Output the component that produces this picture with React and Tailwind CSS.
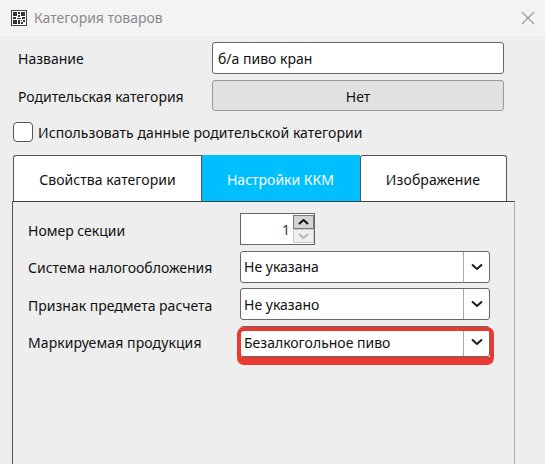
import React from "react";

const Chevron = () => (
  <svg width="12" height="8" viewBox="0 0 12 8" fill="none">
    <path d="M1 1.5L6 6L11 1.5" stroke="#1a1a1a" strokeWidth="2" />
  </svg>
);

const Select = ({ value, highlight, textClass }) => (
  <div className="relative">
    <div className={`flex w-[250px] rounded-[3px] border border-[#666] bg-white ${highlight ? "h-[31px]" : "h-[32px]"}`}>
      <div className={`flex-1 pl-[3px] ${textClass}`}>{value}</div>
      <div className="flex w-[26px] items-center justify-center border-l border-[#aaa]">
        <Chevron />
      </div>
    </div>
    {highlight && (
      <div className="absolute left-[-3px] top-[1px] h-[38px] w-[257px] rounded-[7px] border-[4px] border-b-[8px] border-[#e93a30]" />
    )}
  </div>
);

const Row = ({ label, children }) => (
  <div className="flex items-center">
    <div className="w-[194px] pt-[1px]">{label}</div>
    {children}
  </div>
);

const App = () => {
  return (
    <div className="flex h-[464px] w-[545px] flex-col overflow-hidden bg-[#eeeeee] font-['Noto_Sans',sans-serif] text-[14px] text-[#111]">
      <div className="flex h-[36px] items-center bg-[#f3f3f3] pl-[11px] pr-[10px]">
        <svg width="16" height="16" viewBox="0 0 16 16">
          <rect x="0.5" y="0.5" width="15" height="15" fill="#fff" stroke="#444" />
          <path d="M2 2h4v4H2zM10 2h4v4h-4zM2 10h4v4H2zM10 10h1v1h-1zM12 10h2v2h-2zM10 12h2v2h-2zM7 2h2v2H7zM7 5h2v2H7zM2 7h3v2H2zM6 8h4v1H6zM7 10h2v4H7zM11 7h3v2h-3z" fill="#333" />
        </svg>
        <span className="ml-[7px] pb-[1px] text-[#8a8a8a]">Категория товаров</span>
        <svg className="ml-auto" width="14" height="14" viewBox="0 0 14 14">
          <path d="M1 1L13 13M13 1L1 13" stroke="#9a9a9a" strokeWidth="1.2" />
        </svg>
      </div>

      <div className="flex flex-col pl-[18px] pt-[6px]">
        <Row label="Название">
          <div className="h-[32px] w-[292px] rounded-[3px] border border-[#666] bg-white pl-[5px] leading-[32px]">
            б/а пиво кран
          </div>
        </Row>
        <div className="mt-[6px]">
          <Row label="Родительская категория">
            <div className="h-[31px] w-[292px] rounded-[3px] border border-[#999] bg-[#e1e1e1] text-center leading-[31px]">
              Нет
            </div>
          </Row>
        </div>
      </div>

      <div className="mt-[11px] flex h-[20px] items-center pl-[13px]">
        <div className="h-[20px] w-[20px] rounded-[4px] border border-[#555] bg-white" />
        <span className="ml-[5px] pt-[1px] tracking-[0.07px]">Использовать данные родительской категории</span>
      </div>

      <div className="mt-[13px] flex h-[46px] pl-[13px]">
        <div className="flex w-[188px] items-center justify-center rounded-tl-[3px] border-l border-t border-[#555] bg-white pt-[2px] tracking-[0.05px]">
          Свойства категории
        </div>
        <div className="flex w-[159px] items-center justify-center border-l border-[#555] bg-[#00bfff] pr-[1px] pt-[2px] text-white">
          Настройки ККМ
        </div>
        <div className="flex w-[147px] items-center justify-center rounded-t-[3px] border-x border-t border-[#555] bg-white pr-[1px] pt-[2px] tracking-[0.1px]">
          Изображение
        </div>
      </div>

      <div className="ml-[12px] flex w-[503px] flex-1 flex-col border-l border-t border-r border-l-[#555] border-r-[#aaa] border-t-[#444] pl-[15px] pt-[11px]">
        <div className="flex items-center">
          <div className="w-[212px] pt-[2px]">Номер секции</div>
          <div className="flex h-[32px] w-[75px] border border-[#666] bg-white">
            <div className="flex-1 pr-[3px] text-right leading-[32px] text-[#333]">1</div>
            <div className="flex w-[21px] flex-col py-px">
              <div className="flex h-[14px] items-center justify-center border border-[#777] bg-[#d4d4d4]">
                <svg width="11" height="6" viewBox="0 0 11 6"><path d="M1 5L5.5 1L10 5" fill="none" stroke="#111" strokeWidth="2" /></svg>
              </div>
              <div className="flex h-[14px] items-center justify-center border border-[#ccc] bg-[#f0f0f0]">
                <svg width="11" height="6" viewBox="0 0 11 6"><path d="M1 1L5.5 5L10 1" fill="none" stroke="#b5b5b5" strokeWidth="2" /></svg>
              </div>
            </div>
          </div>
        </div>

        <div className="mt-[6px] flex items-center">
          <div className="w-[212px]">Система налогообложения</div>
          <Select value="Не указана" textClass="leading-[30px]" />
        </div>
        <div className="mt-[5px] flex items-center">
          <div className="w-[212px] pt-[2px]">Признак предмета расчета</div>
          <Select value="Не указано" textClass="leading-[32px]" />
        </div>
        <div className="mt-[6px] flex items-center">
          <div className="w-[212px] pt-[2px] tracking-[0.1px]">Маркируемая продукция</div>
          <Select value="Безалкогольное пиво" textClass="leading-[32px]" highlight />
        </div>
      </div>
    </div>
  );
};

export default App;
